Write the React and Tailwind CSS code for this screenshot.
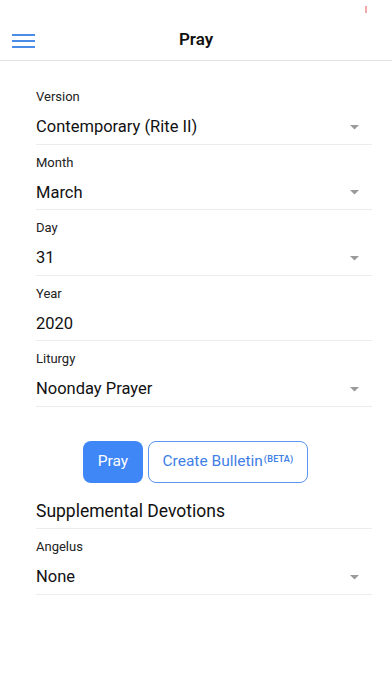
import { useState } from "react";

const FIELDS = [
  { label: "Version", value: "Contemporary (Rite II)", select: true },
  { label: "Month", value: "March", select: true },
  { label: "Day", value: "31", select: true },
  { label: "Year", value: "2020", select: false },
  { label: "Liturgy", value: "Noonday Prayer", select: true },
];

function Caret() {
  return (
    <svg width="9" height="5" viewBox="0 0 9 5" className="shrink-0">
      <path d="M0 0 L9 0 L4.5 4.5 Z" fill="#9a9a9a" />
    </svg>
  );
}

function Field({ label, value, select }) {
  return (
    <div className="border-b border-[#ececec] pb-[4.5px]">
      <div className="mt-[9px] h-[18px] text-[13px] leading-[18px] text-[#222]">{label}</div>
      <div className="mt-[9px] h-[24px] flex items-center justify-between pr-[13px]">
        <span className="text-[16.5px] leading-[24px] text-[#111]">{value}</span>
        {select && <Caret />}
      </div>
    </div>
  );
}

export default function App() {
  const [fields] = useState(FIELDS);

  return (
    <div className="w-[392px] h-[696px] bg-white font-['Roboto','Liberation_Sans',sans-serif] overflow-hidden">
      <div className="h-[20px] relative">
        <div className="absolute left-[365px] top-[6px] w-[2px] h-[7px] bg-[#f2a8a8]" />
      </div>
      <div className="h-[41px] flex items-center border-b border-[#e3e3e3] relative">
        <div className="pl-[12px] flex flex-col gap-[4px] pt-[1px]">
          <div className="w-[23px] h-[2px] bg-[#4a8ce6]" />
          <div className="w-[23px] h-[2px] bg-[#4a8ce6]" />
          <div className="w-[23px] h-[2px] bg-[#4a8ce6]" />
        </div>
        <div className="absolute inset-0 flex items-center justify-center text-[17px] font-semibold text-[#111]">
          Pray
        </div>
      </div>

      <div className="pl-[36px] pr-[20px] pt-[18px]">
        {fields.map((f) => (
          <Field key={f.label} {...f} />
        ))}

        <div className="flex justify-center gap-[5px] mt-[34.5px] pr-[17px]">
          <button className="h-[42px] w-[60px] rounded-[8px] bg-[#3f86f7] text-white text-[15.5px]">
            Pray
          </button>
          <button className="h-[42px] w-[160px] rounded-[8px] border border-[#5b95ee] text-[#3f7fe6] text-[15.5px]">
            Create Bulletin
            <sup className="text-[9px] font-semibold ml-[1px] tracking-wide">(BETA)</sup>
          </button>
        </div>

        <div className="mt-[18px] border-b border-[#ececec] h-[28px] text-[17.5px] font-normal text-[#111] leading-[20px]">
          Supplemental Devotions
        </div>
        <Field label="Angelus" value="None" select />
      </div>
    </div>
  );
}
